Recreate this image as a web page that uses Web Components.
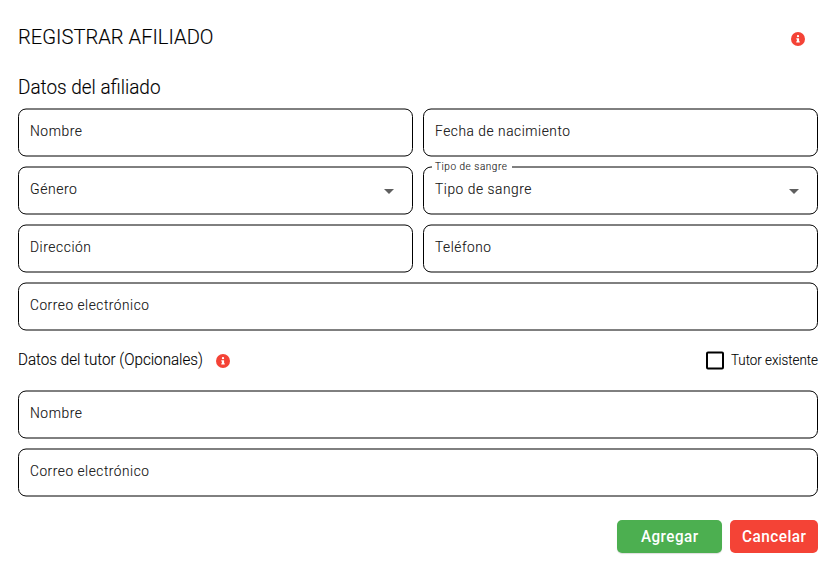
<!DOCTYPE html>
<html lang="es">
<head>
<meta charset="utf-8">
<title>Registrar afiliado</title>
<style>
html,body{margin:0;background:#fff;color:#000;font-family:Roboto,"Liberation Sans",sans-serif}
body{width:837px;height:569px;overflow:hidden}
</style>
</head>
<body>
<affiliate-form></affiliate-form>
<script>
// One line of text set to a given width, size and baseline.
class FitText extends HTMLElement {
  connectedCallback() {
    const a = n => this.getAttribute(n);
    const weight = a('weight') || 300;
    this.attachShadow({mode:'open'}).innerHTML = `
      <style>:host{display:block;flex:none;width:${a('w')}px;height:${a('h')}px}
      svg{display:block;overflow:visible}
      text{font-size:${a('size')}px;font-weight:${weight};letter-spacing:var(--tracking,0);fill:currentColor;stroke:currentColor;stroke-width:${weight == 300 ? .12 : 0}px}</style>
      <svg width="${a('w')}" height="${a('h')}"><text x="0" y="${a('base')}" textLength="${a('w')}" lengthAdjust="spacingAndGlyphs">${a('text')}</text></svg>`;
  }
}
customElements.define('fit-text', FitText);

class InfoIcon extends HTMLElement {
  connectedCallback() {
    this.attachShadow({mode:'open'}).innerHTML = `
      <style>:host{display:block;flex:none;width:14px;height:14px}svg{display:block}</style>
      <svg width="14" height="14" viewBox="0 0 512 512"><circle cx="256" cy="256" r="256" fill="#f44336"/>
      <path fill="#fff" d="M256 110a42 42 0 1 1 0 84a42 42 0 0 1 0-84zM204 224h80a12 12 0 0 1 12 12v100h12a12 12 0 0 1 12 12v24a12 12 0 0 1-12 12H204a12 12 0 0 1-12-12v-24a12 12 0 0 1 12-12h12v-64h-12a12 12 0 0 1-12-12v-24a12 12 0 0 1 12-12z"/></svg>`;
  }
}
customElements.define('info-icon', InfoIcon);

class OutlinedField extends HTMLElement {
  connectedCallback() {
    const floating = this.getAttribute('floating');
    const select = this.hasAttribute('select');
    this.attachShadow({mode:'open'}).innerHTML = `
      <style>
      :host{display:flex;position:relative;height:49px;min-width:0;justify-content:space-between;box-sizing:border-box;padding:0 19px 0 12px;color:#111;--tracking:.6px}
      .outline{position:absolute;left:0;top:0;width:100%;height:49px}
      rect{x:.5px;y:1px;width:calc(100% - 1px);height:47px;rx:7.5px;fill:none;stroke:#000}
      .arrow{display:block;margin-top:23px}
      .label{position:absolute;left:9px;top:-6px;background:#fff;padding:0 4px 0 3px;color:#222}
      </style>
      <svg class="outline"><rect/></svg>
      <slot></slot>
      ${select ? '<svg class="arrow" width="10" height="5"><path d="M0 0H10L5 5z" fill="#5f5f5f"/></svg>' : ''}
      ${floating ? `<div class="label"><fit-text text="${floating}" w="72.5" h="12" base="10" size="10.8"></fit-text></div>` : ''}`;
  }
}
customElements.define('outlined-field', OutlinedField);

class CheckOption extends HTMLElement {
  connectedCallback() {
    this.attachShadow({mode:'open'}).innerHTML = `
      <style>:host{display:flex;gap:7px}svg{display:block}</style>
      <svg width="18" height="19"><rect x="1" y="1.5" width="16" height="16" rx="1" fill="none" stroke="#000" stroke-width="2"/></svg><slot></slot>`;
  }
}
customElements.define('check-option', CheckOption);

class ActionButton extends HTMLElement {
  connectedCallback() {
    this.attachShadow({mode:'open'}).innerHTML = `
      <style>:host{display:block;color:#fff;--tracking:.5px}
      button{display:flex;justify-content:center;width:100%;height:32.5px;border:0;padding:0;margin:0;border-radius:5px;background:var(--fill);color:inherit;font:inherit;box-shadow:var(--shadow,none)}</style>
      <button><slot></slot></button>`;
  }
}
customElements.define('action-button', ActionButton);

class AffiliateForm extends HTMLElement {
  connectedCallback() {
    this.attachShadow({mode:'open'}).innerHTML = `
      <style>
      :host{display:block;box-sizing:border-box;padding:24px 19px 0 18px}
      header{display:flex;justify-content:space-between;padding-right:13px;height:50px}
      header info-icon{margin-top:8px}
      h1,h2,h3{margin:0;font:inherit}
      h2{height:34px}
      .grid{display:grid;grid-template-columns:395px 395px;gap:9px 10px}
      .wide{grid-column:1/-1}
      .tutor{display:flex;height:39px;padding-top:20px}
      .tutor info-icon{margin:3px 0 0 12.7px}
      .tutor check-option{margin-left:auto}
      footer{display:flex;justify-content:flex-end;gap:8px;padding-top:23px}
      .add{width:105px;--fill:#4caf50;--shadow:0 1px 1px #0002}
      .cancel{width:88px;--fill:#f44336}
      </style>
      <header><h1><fit-text text="REGISTRAR AFILIADO" w="195.5" h="30" base="20" size="21"></fit-text></h1><info-icon></info-icon></header>
      <h2><fit-text text="Datos del afiliado" w="142.5" h="30" base="20" size="20.8"></fit-text></h2>
      <div class="grid">
        <outlined-field><fit-text text="Nombre" w="52.5" h="49" base="28" size="15"></fit-text></outlined-field>
        <outlined-field><fit-text text="Fecha de nacimiento" w="135.5" h="49" base="28" size="15"></fit-text></outlined-field>
        <outlined-field select><fit-text text="Género" w="47.5" h="49" base="28" size="15"></fit-text></outlined-field>
        <outlined-field select floating="Tipo de sangre"><fit-text text="Tipo de sangre" w="97" h="49" base="28" size="15"></fit-text></outlined-field>
        <outlined-field><fit-text text="Dirección" w="61.5" h="49" base="28" size="15"></fit-text></outlined-field>
        <outlined-field><fit-text text="Teléfono" w="56.5" h="49" base="28" size="15"></fit-text></outlined-field>
        <outlined-field class="wide"><fit-text text="Correo electrónico" w="119.5" h="49" base="28" size="15"></fit-text></outlined-field>
      </div>
      <div class="tutor"><h3><fit-text text="Datos del tutor (Opcionales)" w="185" h="20" base="14" size="16"></fit-text></h3><info-icon></info-icon>
        <check-option><fit-text text="Tutor existente" w="87" h="19" base="14" size="14.5"></fit-text></check-option></div>
      <div class="grid">
        <outlined-field class="wide"><fit-text text="Nombre" w="52.5" h="49" base="28" size="15"></fit-text></outlined-field>
        <outlined-field class="wide"><fit-text text="Correo electrónico" w="119.5" h="49" base="28" size="15"></fit-text></outlined-field>
      </div>
      <footer>
        <action-button class="add"><fit-text text="Agregar" w="57.5" h="32" base="22" size="16" weight="500"></fit-text></action-button>
        <action-button class="cancel"><fit-text text="Cancelar" w="64.5" h="32" base="22" size="16" weight="500"></fit-text></action-button>
      </footer>`;
  }
}
customElements.define('affiliate-form', AffiliateForm);
</script>
</body>
</html>
